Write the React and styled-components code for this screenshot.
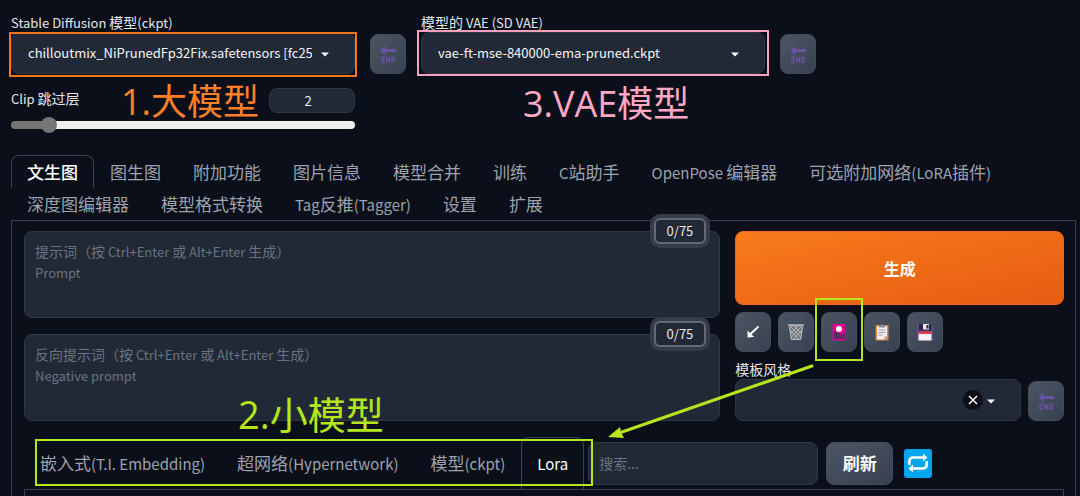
import styled, { createGlobalStyle, css } from "styled-components";

const mainTabs = [
  "文生图",
  "图生图",
  "附加功能",
  "图片信息",
  "模型合并",
  "训练",
  "C站助手",
  "OpenPose 编辑器",
  "可选附加网络(LoRA插件)",
  "深度图编辑器",
  "模型格式转换",
  "Tag反推(Tagger)",
  "设置",
  "扩展",
];

const networkTabs = ["嵌入式(T.I. Embedding)", "超网络(Hypernetwork)", "模型(ckpt)", "Lora"];

const tools = [
  { label: "读取参数", icon: <ArrowIcon /> },
  { label: "清空提示词", icon: <BinIcon /> },
  { label: "附加网络", icon: <CardIcon />, marked: true },
  { label: "应用模板", icon: <ClipboardIcon /> },
  { label: "保存模板", icon: <FloppyIcon /> },
];

export default function App() {
  return (
    <>
      <GlobalStyle />
      <Page>
        <Settings>
          <Group>
            <Label htmlFor="ckpt">
              <Mixed text="Stable Diffusion 模型(ckpt)" />
            </Label>
            <SelectBox>
              <Select id="ckpt">
                <option>chilloutmix_NiPrunedFp32Fix.safetensors [fc2511737a]</option>
              </Select>
              <Caret />
              <Frame $color="#f5761a" $inset="0 -2px -3px" />
            </SelectBox>
          </Group>
          <IconButton aria-label="刷新模型">
            <EndIcon />
          </IconButton>
          <Group>
            <Label htmlFor="vae">
              <Mixed text="模型的 VAE (SD VAE)" />
            </Label>
            <SelectBox>
              <Select id="vae">
                <option>vae-ft-mse-840000-ema-pruned.ckpt</option>
              </Select>
              <Caret />
              <Frame $color="#f7a1bf" $inset="-2px -4px -2px -4px" />
            </SelectBox>
            <Note $color="#ffa8c5" $left={102} $top={68}>
              3.VAE模型
            </Note>
          </Group>
          <IconButton aria-label="刷新 VAE">
            <EndIcon />
          </IconButton>
        </Settings>

        <ClipSkip>
          <ClipHead>
            <Label htmlFor="clip">
              <Mixed text="Clip 跳过层" />
            </Label>
            <NumberInput id="clip" defaultValue="2" />
          </ClipHead>
          <Slider type="range" min="1" max="12" defaultValue="2" aria-label="Clip 跳过层" />
          <Note $color="#ff7f27" $left={110} $top={-10}>
            1.大模型
          </Note>
        </ClipSkip>

        <Tabs>
          {mainTabs.map((name, i) => (
            <Tab key={name} $active={i === 0}>
              <Mixed text={name} size={15} />
            </Tab>
          ))}
        </Tabs>

        <Panel>
          <Columns>
            <Prompts>
              <PromptBox>
                <TextArea id="prompt" placeholder=" " />
                <Hint htmlFor="prompt">
                  <Mixed text={"提示词（按 Ctrl+Enter 或 Alt+Enter 生成）\nPrompt"} />
                </Hint>
                <Counter>0/75</Counter>
              </PromptBox>
              <PromptBox>
                <TextArea id="negative" placeholder=" " />
                <Hint htmlFor="negative">
                  <Mixed text={"反向提示词（按 Ctrl+Enter 或 Alt+Enter 生成）\nNegative prompt"} />
                </Hint>
                <Counter>0/75</Counter>
                <Note $color="#b5e61d" $left={214} $top={56} $size={38}>
                  2.小模型
                </Note>
              </PromptBox>
            </Prompts>
            <Actions>
              <Generate>生成</Generate>
              <Tools>
                {tools.map(({ label, icon, marked }) => (
                  <IconButton key={label} aria-label={label}>
                    {icon}
                    {marked && <ToolFrame />}
                  </IconButton>
                ))}
              </Tools>
              <Styles>
                <Group>
                  <Label htmlFor="styles">模板风格</Label>
                  <SelectBox>
                    <Select id="styles" />
                    <Clear aria-label="清除">
                      <svg width="10" height="10" viewBox="0 0 10 10">
                        <path d="M1 1l8 8M9 1l-8 8" stroke="#fff" strokeWidth="1.5" />
                      </svg>
                    </Clear>
                    <Caret />
                  </SelectBox>
                </Group>
                <IconButton aria-label="刷新模板">
                  <EndIcon />
                </IconButton>
              </Styles>
              <Pointer width="210" height="80" viewBox="0 0 210 80">
                <path d="M205 4L15 70" />
                <polygon points="1,75 13,65 14,70 17,76" />
              </Pointer>
            </Actions>
          </Columns>

          <Networks>
            <NetworkTabs>
              {networkTabs.map((name) => (
                <NetworkTab key={name} $active={name === "Lora"}>
                  <Mixed text={name} size={15} />
                </NetworkTab>
              ))}
              <TabsFrame />
            </NetworkTabs>
            <Search placeholder="搜索..." aria-label="搜索" />
            <Refresh>刷新</Refresh>
            <Swap aria-label="同步">
              <RepeatIcon />
            </Swap>
          </Networks>
          <NetworkBody />
        </Panel>
      </Page>
    </>
  );
}

// latin letters are set a little smaller than the chinese around them
function Mixed({ text, size = 13 }) {
  return text
    .split(/([\x20-\x7e]+)/)
    .map((part, i) =>
      i % 2 ? (
        <Latin key={i} $size={size}>
          {part}
        </Latin>
      ) : (
        part
      )
    );
}

function Caret() {
  return (
    <CaretSvg width="8" height="5" viewBox="0 0 8 5">
      <path d="M0 0.5h8L4 4.5z" fill="#fff" />
    </CaretSvg>
  );
}

function EndIcon() {
  return (
    <svg width="18" height="18" viewBox="0 0 18 18">
      <path d="M1 5.5l5.5-5v3.4h10.5v3.2H6.5v3.4z" fill="#6853a0" />
      <path
        d="M6 12H3v5h3M3 14.5h2.6M7.6 17.5v-5l3 4.4v-5M13 12v5h1.2q1.6-.3 1.6-2.5t-1.6-2.5z"
        fill="none"
        stroke="#6853a0"
        strokeWidth="1.4"
      />
    </svg>
  );
}

function ArrowIcon() {
  return (
    <svg width="18" height="18" viewBox="0 0 18 18">
      <path d="M14.5 3.5L6 11.5" stroke="#fff" strokeWidth="2" />
      <path d="M3.5 14.5V7.5l2.5 2.5 1.8 1.8 2.4 2.2z" fill="#fff" />
    </svg>
  );
}

function BinIcon() {
  return (
    <svg width="18" height="18" viewBox="0 0 18 18">
      <path d="M2 2.5L4 17h10l2-14.5z" fill="#6f737b" />
      <path
        d="M2.5 4L4.3 16.5h9.4L15.5 4M3 7l9 9.5M3.5 3.5l10.5 11M7.5 3.5l7 7M15 7l-9 9.5M14.5 3.5L4 14.5M10.5 3.5l-7 7"
        fill="none"
        stroke="#b9bbbf"
        strokeWidth="1"
      />
      <path d="M1 1.2h16v2.2H1z" fill="#aeb0b4" />
    </svg>
  );
}

function CardIcon() {
  return (
    <svg width="18" height="18" viewBox="0 0 18 18">
      <path d="M2.5 1h13v16.5h-13z" fill="#e3008c" />
      <path d="M4 9.5q3-1.5 5.5 1t5-1V16H4z" fill="#5b2a60" />
      <circle cx="9" cy="6" r="3" fill="#fff" />
    </svg>
  );
}

function ClipboardIcon() {
  return (
    <svg width="18" height="18" viewBox="0 0 18 18">
      <path d="M2.5 2h13v15.5h-13z" fill="#d68c45" />
      <path d="M4 3.5h10V13l-3 3.5H4z" fill="#f3f0f5" />
      <path d="M14 13h-3v3.5z" fill="#c9c2d0" />
      <path d="M5.5 7h7M5.5 9.5h7M5.5 12h4" stroke="#9b94a6" />
      <path d="M6 2h2q1-2 2 0h2v2.5H6z" fill="#8d8798" />
    </svg>
  );
}

function FloppyIcon() {
  return (
    <svg width="18" height="18" viewBox="0 0 18 18">
      <path d="M1 1h14l2 2v14.5H1z" fill="#5b4a86" />
      <path d="M3 1h12v6.5H3z" fill="#2b2444" />
      <path d="M7 1h6v5.5H7z" fill="#e6e4ea" />
      <path d="M10.5 2h2v3.5h-2z" fill="#2b2444" />
      <path d="M2.5 9.5h13v8h-13z" fill="#f3f1f5" />
      <path d="M2.5 8.5h13V11h-13z" fill="#e8394a" />
    </svg>
  );
}

function RepeatIcon() {
  return (
    <svg width="22" height="22" viewBox="0 0 22 22" fill="none" stroke="#fff" strokeWidth="2.6">
      <path d="M2.3 13V10Q2.3 5.5 6.5 5.5H16M19.7 9v3Q19.7 16.5 15.5 16.5H6" />
      <path d="M16 1.5l4.5 4-4.5 4zM6 12.5l-4.5 4 4.5 4z" fill="#fff" stroke="none" />
    </svg>
  );
}

const GlobalStyle = createGlobalStyle`
  * {
    box-sizing: border-box;
  }
  body {
    margin: 0;
    background: #0b0f19;
    color: #e5e7eb;
    overflow: hidden;
  }
  body, button, input, select, textarea {
    font-family: "Noto Sans CJK SC", sans-serif;
    font-size: 14px;
    line-height: 20px;
  }
`;

const surface = css`
  background: #212936;
  border: 1px solid #2f3846;
  border-radius: 8px;
  color: #f3f4f6;
`;

const raised = css`
  background: linear-gradient(to bottom right, #4b5563, #374151);
  border: 1px solid #434c59;
  border-radius: 8px;
  color: #fff;
  cursor: pointer;
`;

const Page = styled.main`
  padding: 12px 4px 0 11px;
`;

const Latin = styled.span`
  font-size: ${(props) => props.$size}px;
`;

const Settings = styled.div`
  display: flex;
  align-items: flex-end;
  gap: 15px;
  & > div {
    flex: 0 1 344px;
  }
`;

const Group = styled.div`
  position: relative;
  flex: 1;
  min-width: 0;
`;

const Label = styled.label`
  display: block;
  height: 20px;
  white-space: nowrap;
`;

const SelectBox = styled.div`
  position: relative;
`;

const Select = styled.select`
  ${surface}
  appearance: none;
  display: block;
  width: 100%;
  height: 42px;
  padding: 0 42px 0 16px;
  font-size: 13px;
  outline: none;
`;

const CaretSvg = styled.svg`
  position: absolute;
  right: 26px;
  top: 20px;
`;

const Frame = styled.span`
  position: absolute;
  inset: ${(props) => props.$inset};
  border: 2px solid ${(props) => props.$color};
  pointer-events: none;
`;

const Note = styled.span`
  position: absolute;
  left: ${(props) => props.$left}px;
  top: ${(props) => props.$top}px;
  color: ${(props) => props.$color};
  font-family: "Open Sans", "Noto Sans CJK SC", sans-serif;
  font-size: ${(props) => props.$size || 36}px;
  line-height: 48px;
  white-space: nowrap;
  pointer-events: none;
`;

const IconButton = styled.button`
  ${raised}
  position: relative;
  display: flex;
  align-items: center;
  justify-content: center;
  flex: none;
  width: 36px;
  height: 40px;
  padding: 0;
`;

const ClipSkip = styled.div`
  position: relative;
  max-width: 344px;
  margin-top: 14px;
`;

const ClipHead = styled.div`
  display: flex;
  align-items: flex-start;
  justify-content: space-between;
`;

const NumberInput = styled.input`
  ${surface}
  width: 86px;
  height: 25px;
  padding: 0 16px 0 8px;
  font-size: 13px;
  text-align: center;
`;

const Slider = styled.input`
  appearance: none;
  display: block;
  width: 100%;
  height: 8px;
  margin: 8px 0 0;
  border-radius: 4px;
  background: linear-gradient(to right, #767676 12%, #efefef 12%);
  &::-webkit-slider-thumb {
    appearance: none;
    width: 16px;
    height: 16px;
    border-radius: 50%;
    background: #767676;
  }
`;

const Tabs = styled.nav`
  display: flex;
  flex-wrap: wrap;
  margin-top: 26px;
  padding-bottom: 1px;
`;

const Tab = styled.button`
  height: 33px;
  margin-bottom: -1px;
  padding: 0 15px;
  border: 1px solid ${(props) => (props.$active ? "#374151" : "transparent")};
  border-bottom: none;
  border-radius: 8px 8px 0 0;
  background: none;
  color: ${(props) => (props.$active ? "#fff" : "#9ca3af")};
  font-size: 17px;
  font-weight: ${(props) => (props.$active ? 500 : 400)};
  line-height: 24px;
  white-space: nowrap;
  cursor: pointer;
`;

const Panel = styled.section`
  padding: 10px 11px 0 12px;
  border: 1px solid #374151;
  border-bottom: none;
`;

const Columns = styled.div`
  display: flex;
  gap: 15px;
`;

const Prompts = styled.div`
  flex: 697;
  display: flex;
  flex-direction: column;
  gap: 16px;
`;

const PromptBox = styled.div`
  position: relative;
`;

const TextArea = styled.textarea`
  ${surface}
  display: block;
  width: 100%;
  height: 87px;
  padding: 10px;
  resize: none;
`;

const Hint = styled.label`
  position: absolute;
  left: 11px;
  top: 10px;
  color: #6b7280;
  white-space: pre-line;
  cursor: text;
  ${TextArea}:not(:placeholder-shown) + & {
    display: none;
  }
`;

const Counter = styled.span`
  position: absolute;
  right: 14px;
  top: -13px;
  padding: 1px 11px;
  border: 2px solid #636a75;
  border-radius: 6px;
  background: #212936;
  box-shadow: 0 0 0 4px #353c48;
  font-size: 13px;
`;

const Actions = styled.div`
  position: relative;
  flex: 329;
`;

const Generate = styled.button`
  display: block;
  width: 100%;
  height: 74px;
  border: 1px solid #ea6518;
  border-radius: 8px;
  background: linear-gradient(to bottom right, #f97b1c, #e65c12);
  color: #fff;
  font-size: 16px;
  font-weight: 700;
`;

const Tools = styled.div`
  display: flex;
  gap: 7px;
  margin-top: 7px;
`;

const ToolFrame = styled.span`
  position: absolute;
  inset: -15px -7px -10px -7px;
  border: 2px solid #b5e61d;
  pointer-events: none;
  z-index: 1;
`;

const Styles = styled.div`
  display: flex;
  align-items: flex-end;
  gap: 7px;
  margin-top: 7px;
`;

const Clear = styled.button`
  position: absolute;
  right: 38px;
  top: 11px;
  display: flex;
  align-items: center;
  justify-content: center;
  width: 20px;
  height: 20px;
  padding: 0;
  border: none;
  border-radius: 50%;
  background: #0b0f19;
`;

const Pointer = styled.svg`
  position: absolute;
  left: -128px;
  top: 131px;
  pointer-events: none;
  fill: #b5e61d;
  & path {
    stroke: #b5e61d;
    stroke-width: 3;
    stroke-linecap: round;
  }
`;

const Networks = styled.div`
  display: flex;
  align-items: center;
  margin-top: 16px;
`;

const NetworkTabs = styled.div`
  position: relative;
  display: flex;
  align-self: stretch;
`;

const NetworkTab = styled(Tab)`
  height: 52px;
  margin-bottom: 0;
  font-weight: 400;
`;

const TabsFrame = styled.span`
  position: absolute;
  inset: 2px -9px 3px 11px;
  border: 2px solid #b5e61d;
  pointer-events: none;
`;

const Search = styled.input`
  ${surface}
  width: 230px;
  height: 43px;
  margin-left: 4px;
  padding: 0 10px;
  &::placeholder {
    color: #6b7280;
  }
`;

const Refresh = styled.button`
  ${raised}
  width: 67px;
  height: 43px;
  margin-left: 8px;
  padding: 0;
  font-size: 17px;
  font-weight: 700;
`;

const Swap = styled.button`
  display: flex;
  align-items: center;
  justify-content: center;
  width: 28px;
  height: 29px;
  margin-left: 11px;
  padding: 0;
  border: none;
  border-radius: 3px;
  background: #00a6ed;
`;

const NetworkBody = styled.div`
  height: 24px;
  border: 1px solid #374151;
  border-bottom: none;
`;
